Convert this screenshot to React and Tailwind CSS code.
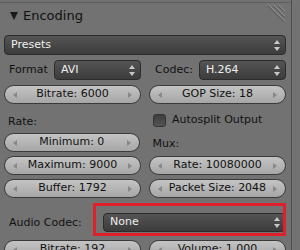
import React from "react";

const font = { fontFamily: '"DejaVu Sans", "Liberation Sans", sans-serif' };

function NumField({ label }) {
  return (
    <div className="relative flex h-[19px] flex-1 items-center justify-center rounded-full border border-[#3a3a3a] bg-gradient-to-b from-[#c4c4c4] to-[#a6a6a6] text-[11px] text-[#111]">
      <svg className="absolute left-[8px] top-[6px]" width="4" height="6" viewBox="0 0 4 6">
        <path d="M4 0 L0 3 L4 6 Z" fill="#888" />
      </svg>
      <span>{label}</span>
      <svg className="absolute right-[8px] top-[6px]" width="4" height="6" viewBox="0 0 4 6">
        <path d="M0 0 L4 3 L0 6 Z" fill="#888" />
      </svg>
    </div>
  );
}

function Menu({ label, className = "" }) {
  return (
    <div
      className={
        "flex h-[19px] items-center justify-between rounded-[4px] border border-[#2c2c2c] bg-gradient-to-b from-[#545454] to-[#3c3c3c] pl-[6px] pr-[5px] text-[11px] text-[#eee] " +
        className
      }
    >
      <span>{label}</span>
      <svg width="6" height="11" viewBox="0 0 6 11">
        <path d="M3 0 L6 4 L0 4 Z" fill="#c8c8c8" />
        <path d="M0 7 L6 7 L3 11 Z" fill="#c8c8c8" />
      </svg>
    </div>
  );
}

export default function App() {
  return (
    <div className="flex h-[250px] w-[300px] overflow-hidden bg-[#727272]" style={font}>
      <div className="w-[292px] shrink-0 border-r border-[#4e4e4e] pt-[2px]">
        <div className="relative border-t border-[#5e5e5e] pl-[4px] pr-[5px]">
          {/* header */}
          <div className="relative flex h-[26px] items-center gap-[5px] pl-[6px] text-[13px] text-[#111]">
            <svg width="8" height="8" viewBox="0 0 8 8">
              <path d="M0 0 L8 0 L4 8 Z" fill="#1a1a1a" />
            </svg>
            <span>Encoding</span>
            <svg className="absolute right-[1px] top-[2px]" width="18" height="18" viewBox="0 0 18 18">
              <path d="M2 0 L18 16 M7 0 L18 11 M12 0 L18 6" stroke="#8e8e8e" strokeWidth="1" />
              <path d="M1 1 L17 17 M6 1 L17 12 M11 1 L17 7" stroke="#5a5a5a" strokeWidth="1" />
            </svg>
          </div>

          <Menu label="Presets" className="mt-[6px] h-[20px]" />

          <div className="mt-[5px] flex h-[20px] items-center text-[11px] text-[#111]">
            <div className="flex w-[137px] items-center">
              <span className="w-[50px] pl-[5px]">Format</span>
              <Menu label="AVI" className="h-[20px] flex-1" />
            </div>
            <div className="ml-[8px] flex flex-1 items-center">
              <span className="w-[50px] pl-[6px]">Codec:</span>
              <Menu label="H.264" className="h-[20px] flex-1" />
            </div>
          </div>

          <div className="mt-[5px] flex gap-[8px]">
            <NumField label="Bitrate: 6000" />
            <NumField label="GOP Size: 18" />
          </div>

          <div className="mt-[4px] flex h-[24px] items-center text-[11px] text-[#111]">
            <span className="w-[145px] pl-[4px] pt-[4px]">Rate:</span>
            <div className="flex items-center gap-[6px] pl-[4px]">
              <div className="h-[13px] w-[13px] rounded-[3px] border border-[#333] bg-gradient-to-b from-[#3e3e3e] to-[#555]" />
              <span>Autosplit Output</span>
            </div>
          </div>

          <div className="mt-[1px] flex gap-[8px]">
            <NumField label="Minimum: 0" />
            <div className="flex flex-1 items-end pl-[5px] text-[11px] text-[#111]">Mux:</div>
          </div>

          <div className="mt-[4px] flex gap-[8px]">
            <NumField label="Maximum: 9000" />
            <NumField label="Rate: 10080000" />
          </div>

          <div className="mt-[4px] flex gap-[8px]">
            <NumField label="Buffer: 1792" />
            <NumField label="Packet Size: 2048" />
          </div>

          <div className="mt-[15px] flex h-[19px] items-center text-[11px] text-[#111]">
            <span className="w-[99px] pl-[5px] pt-[2px]">Audio Codec:</span>
            <Menu label="None" className="flex-1" />
          </div>

          <div className="mt-[8px] flex gap-[8px]">
            <NumField label="Bitrate: 192" />
            <NumField label="Volume: 1.000" />
          </div>

          {/* highlight annotation */}
          <div className="pointer-events-none absolute left-[93px] top-[200px] h-[33px] w-[193px] border-[3px] border-[#e0202a]" />
        </div>
      </div>
    </div>
  );
}
